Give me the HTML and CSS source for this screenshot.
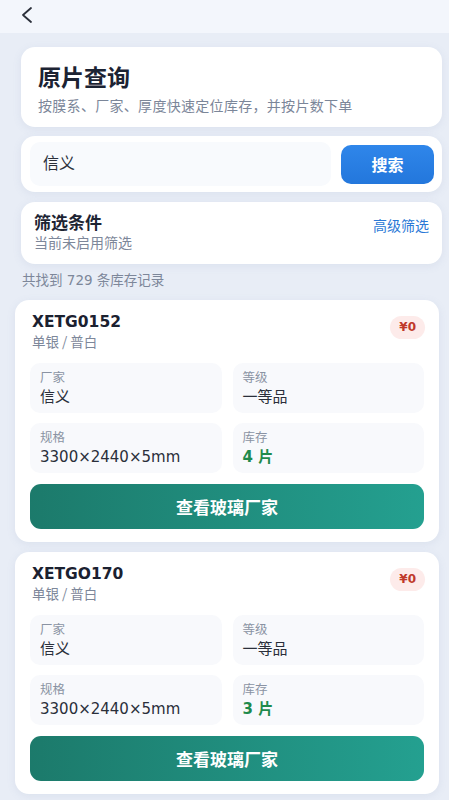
FILE: index.html
```html
<!DOCTYPE html>
<html lang="zh-CN">
    <head>
        <meta charset="UTF-8">
        <meta name="viewport" content="width=device-width, initial-scale=1.0">
        <title>原片查询</title>
        <link rel="stylesheet" href="styles.css">
    </head>
    <body>
        <div class="nav-bar">
            <svg class="back" width="14" height="18" viewBox="0 0 14 18">
                <path d="M11 2 L3 9 L11 16" fill="none" stroke="#2a2f3a" stroke-width="1.8" stroke-linecap="round" stroke-linejoin="round"/>
            </svg>
        </div>
        <div class="page">
            <div class="card header-card">
                <div class="page-title">原片查询</div>
                <div class="page-desc">按膜系、厂家、厚度快速定位库存，并按片数下单</div>
            </div>

            <div class="card search-card">
                <div class="search-input">信义</div>
                <button class="search-btn">搜索</button>
            </div>

            <div class="card filter-card">
                <div>
                    <div class="filter-title">筛选条件</div>
                    <div class="filter-sub">当前未启用筛选</div>
                </div>
                <span class="filter-link">高级筛选</span>
            </div>

            <div class="result-count">共找到 729 条库存记录</div>

            <div class="card item-card">
                <div class="item-head">
                    <div>
                        <div class="item-code">XETG0152</div>
                        <div class="item-sub">单银 / 普白</div>
                    </div>
                    <span class="price">¥0</span>
                </div>
                <div class="info-grid">
                    <div class="info-cell"><div class="info-label">厂家</div><div class="info-value">信义</div></div>
                    <div class="info-cell"><div class="info-label">等级</div><div class="info-value">一等品</div></div>
                    <div class="info-cell"><div class="info-label">规格</div><div class="info-value">3300×2440×5mm</div></div>
                    <div class="info-cell"><div class="info-label">库存</div><div class="info-value stock">4 片</div></div>
                </div>
                <button class="action-btn">查看玻璃厂家</button>
            </div>

            <div class="card item-card">
                <div class="item-head">
                    <div>
                        <div class="item-code">XETGO170</div>
                        <div class="item-sub">单银 / 普白</div>
                    </div>
                    <span class="price">¥0</span>
                </div>
                <div class="info-grid">
                    <div class="info-cell"><div class="info-label">厂家</div><div class="info-value">信义</div></div>
                    <div class="info-cell"><div class="info-label">等级</div><div class="info-value">一等品</div></div>
                    <div class="info-cell"><div class="info-label">规格</div><div class="info-value">3300×2440×5mm</div></div>
                    <div class="info-cell"><div class="info-label">库存</div><div class="info-value stock">3 片</div></div>
                </div>
                <button class="action-btn">查看玻璃厂家</button>
            </div>
        </div>
    </body>
</html>
```

FILE: styles.css
```css
body {
    font-family: "DejaVu Sans", "Noto Sans CJK SC", sans-serif;
    margin: 0;
    padding: 0;
    background-color: #e8edf6;
    color: #1d2433;
}

.nav-bar {
    height: 33px;
    background-color: #f3f6fc;
    display: flex;
    align-items: center;
    padding-left: 20px;
}

.back {
    display: block;
    margin-top: -4px;
}

.page {
    display: flex;
    flex-direction: column;
    padding: 14px 7px 20px 21px;
}

.card {
    background-color: #ffffff;
    border-radius: 14px;
    box-shadow: 0 2px 8px rgba(120, 140, 180, 0.12);
}

.header-card {
    padding: 14px 17px 12px 17px;
    margin-bottom: 9px;
}

.page-title {
    font-family: "Noto Sans CJK SC", sans-serif;
    font-size: 23px;
    font-weight: 700;
    line-height: 30px;
    color: #1c2333;
}

.page-desc {
    font-family: "Noto Sans CJK SC", sans-serif;
    font-size: 14px;
    line-height: 20px;
    letter-spacing: 0.3px;
    color: #7b8699;
    margin-top: 4px;
}

.search-card {
    display: flex;
    align-items: center;
    gap: 10px;
    padding: 6px 8px 6px 9px;
    margin-bottom: 10px;
}

.search-input {
    flex: 1;
    height: 44px;
    line-height: 40px;
    background-color: #f8fafd;
    border-radius: 10px;
    padding-left: 13px;
    font-family: "Noto Sans CJK SC", sans-serif;
    font-size: 16px;
    color: #2a2f3a;
}

.search-btn {
    width: 93px;
    height: 39px;
    border: none;
    border-radius: 10px;
    background: linear-gradient(180deg, #2f86ea, #2377dc);
    color: #ffffff;
    font-family: "Noto Sans CJK SC", sans-serif;
    font-size: 16px;
    font-weight: 700;
}

.filter-card {
    display: flex;
    justify-content: space-between;
    align-items: center;
    padding: 9px 13px 13px 13px;
    margin-bottom: 7px;
}

.filter-title {
    font-family: "Noto Sans CJK SC", sans-serif;
    font-size: 17px;
    line-height: 22px;
    font-weight: 700;
    color: #1d2433;
}

.filter-sub {
    font-family: "Noto Sans CJK SC", sans-serif;
    font-size: 14px;
    line-height: 18px;
    color: #7d879a;
}

.filter-link {
    font-family: "Noto Sans CJK SC", sans-serif;
    font-size: 14px;
    color: #2a78d6;
    margin-bottom: 12px;
}

.result-count {
    font-family: "DejaVu Sans", "Noto Sans CJK SC", sans-serif;
    font-size: 13.5px;
    line-height: 18px;
    color: #7d879a;
    padding-left: 1px;
    margin-bottom: 11px;
}

.item-card {
    padding: 12px 15px 13px 15px;
    margin-left: -6px;
    margin-right: 3px;
    margin-bottom: 10px;
}

.item-head {
    display: flex;
    justify-content: space-between;
    align-items: flex-start;
}

.item-code {
    font-size: 15.5px;
    line-height: 20px;
    font-weight: 700;
    color: #1b2130;
    padding-left: 2px;
}

.item-sub {
    font-family: "Noto Sans CJK SC", sans-serif;
    font-size: 13.5px;
    line-height: 18px;
    color: #7d879a;
    padding-left: 2px;
}

.price {
    margin-top: 4px;
    margin-right: -1px;
    background-color: #fdebea;
    color: #c0392b;
    font-size: 12px;
    font-weight: 700;
    line-height: 13px;
    padding: 5px 9px;
    border-radius: 12px;
}

.info-grid {
    display: grid;
    grid-template-columns: 1fr 1fr;
    gap: 10px 11px;
    margin-top: 13px;
}

.info-cell {
    background-color: #f8f9fc;
    border-radius: 10px;
    padding: 6px 10px;
}

.info-label {
    font-family: "Noto Sans CJK SC", sans-serif;
    font-size: 12.5px;
    line-height: 16px;
    color: #8a93a3;
}

.info-value {
    font-family: "DejaVu Sans", "Noto Sans CJK SC", sans-serif;
    font-size: 15px;
    line-height: 20px;
    color: #2a2f3a;
    margin-top: 2px;
}

.info-value.stock {
    color: #1f8a4c;
    font-weight: 700;
}

.action-btn {
    display: block;
    width: 100%;
    height: 45px;
    margin-top: 11px;
    border: none;
    border-radius: 11px;
    background: linear-gradient(90deg, #1c7a6b, #24a090);
    color: #ffffff;
    font-family: "Noto Sans CJK SC", sans-serif;
    font-size: 17px;
    font-weight: 700;
}
```
